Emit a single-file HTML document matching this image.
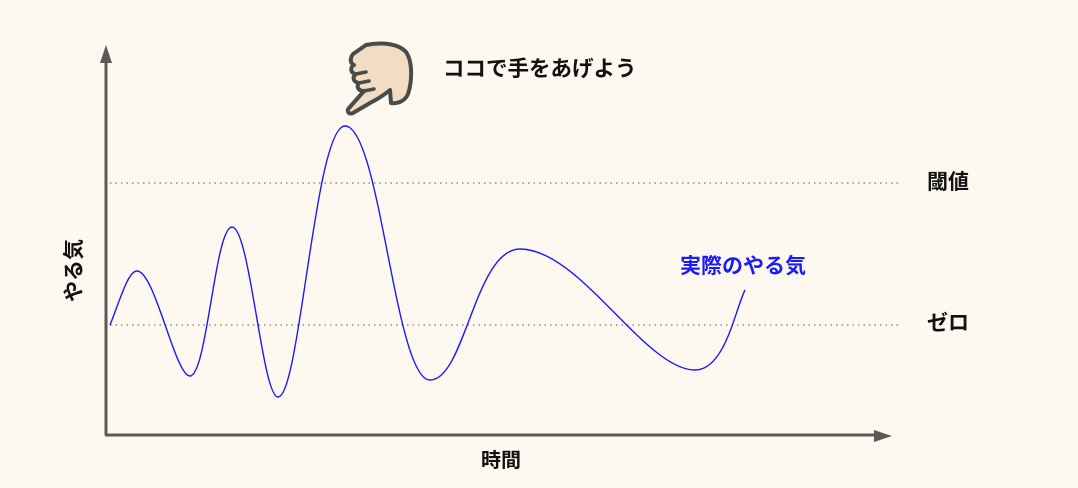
<!DOCTYPE html>
<html><head><meta charset="utf-8"><style>
html,body{margin:0;padding:0;background:#fdf9f0;width:1078px;height:488px;overflow:hidden}
.t{position:absolute;font-family:"Liberation Sans","Noto Sans CJK JP",sans-serif;font-weight:bold;color:#111;white-space:nowrap;line-height:1}
</style></head><body>
<svg width="1078" height="488" style="position:absolute;left:0;top:0">
<line x1="110" y1="183" x2="902" y2="183" stroke="#777" stroke-width="1.3" stroke-dasharray="1.5 4"/>
<line x1="110" y1="325" x2="902" y2="325" stroke="#777" stroke-width="1.3" stroke-dasharray="1.5 4"/>
<line x1="106" y1="58" x2="106" y2="435" stroke="#5a5a5a" stroke-width="3"/>
<polygon points="106,45 100,63 112,63" fill="#5a5a5a"/>
<line x1="105" y1="435" x2="878" y2="435" stroke="#5a5a5a" stroke-width="3"/>
<polygon points="892,436 874,430 874,442" fill="#5a5a5a"/>
<path d="M110,325 C120,300 128,271 137,271 C155,271 175,376 190,376 C207,376 215,227 232,227 C250,227 262,397 278,397 C300,397 315,126 345,126 C380,126 395,380 430,380 C465,380 475,249 520,249 C580,249 645,370 695,370 C725,370 735,310 745,290" fill="none" stroke="#1a1aff" stroke-width="1.4"/>
<path d="M366,45 C380,42 398,43 406,52 C413,62 412,82 408,94 C405,101 398,104 391,103 L390,90 C384,95 376,100 370,103 L353,113 C349,115 346,111 349,108 L364,91 C358,91 356,86 359,83 C353,82 352,77 356,74 C350,73 350,67 354,65 C349,63 350,55 356,52 Z" fill="#f3dcc4" stroke="#4a4a4a" stroke-width="4" stroke-linejoin="round"/>
<path d="M356,74 L366,72 M359,83 L369,81 M364,91 L374,89" stroke="#4a4a4a" stroke-width="3.5" stroke-linecap="round"/>
</svg>
<div class="t" style="left:443px;top:59px;font-size:21.5px">ココで手をあげよう</div>
<div class="t" style="left:927px;top:172px;font-size:21px">閾値</div>
<div class="t" style="left:927px;top:313px;font-size:21px">ゼロ</div>
<div class="t" style="left:680px;top:256px;font-size:21px;color:#1a1aff">実際のやる気</div>
<div class="t" style="left:481px;top:451px;font-size:20px">時間</div>
<div class="t" style="left:43px;top:260px;font-size:21px;transform:rotate(-90deg)">やる気</div>
</body></html>
